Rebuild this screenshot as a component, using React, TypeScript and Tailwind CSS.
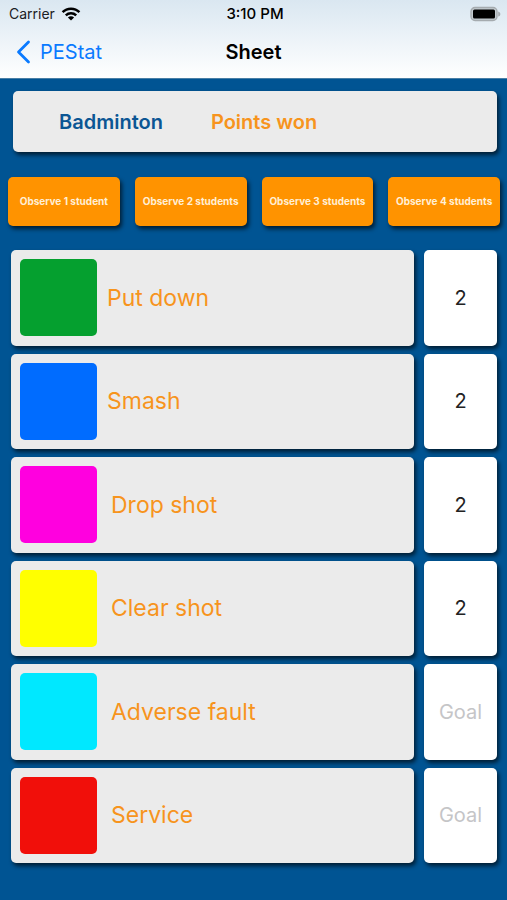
import { useState } from "react";

interface Action {
  id: string;
  label: string;
  swatch: string;
  // extra space between the swatch and the label
  inset: string;
  goal: string;
}

const initialActions: Action[] = [
  { id: "put-down", label: "Put down", swatch: "bg-[#05a02f]", inset: "pl-2.5", goal: "2" },
  { id: "smash", label: "Smash", swatch: "bg-[#006cff]", inset: "pl-2.5", goal: "2" },
  { id: "drop-shot", label: "Drop shot", swatch: "bg-[#ff00df]", inset: "pl-3.5", goal: "2" },
  { id: "clear-shot", label: "Clear shot", swatch: "bg-[#ffff00]", inset: "pl-3.5", goal: "2" },
  { id: "adverse-fault", label: "Adverse fault", swatch: "bg-[#00e8ff]", inset: "pl-3.5", goal: "" },
  { id: "service", label: "Service", swatch: "bg-[#f10f0a]", inset: "pl-3.5", goal: "" },
];

const observeModes = [
  "Observe 1 student",
  "Observe 2 students",
  "Observe 3 students",
  "Observe 4 students",
];

function WifiIcon() {
  return (
    <svg width="20" height="14" viewBox="0 0 20 14" fill="none" stroke="#000" strokeWidth="2.5" aria-hidden="true">
      <path d="M1.6 5.2C6.2 0.6 13.8 0.6 18.4 5.2" />
      <path d="M4.8 8.4C7.7 5.6 12.3 5.6 15.2 8.4" />
      <path d="M10 13.6L6.9 10.5C8.7 8.9 11.3 8.9 13.1 10.5Z" fill="#000" stroke="none" />
    </svg>
  );
}

function BatteryIcon() {
  return (
    <svg width="31" height="16" viewBox="0 0 31 16" aria-hidden="true">
      <rect x="1" y="1.5" width="26" height="13" rx="4" fill="#c3cbd0" stroke="#a5abaf" strokeWidth="1.4" />
      <rect x="3" y="3.5" width="22" height="9" rx="1.5" fill="#000" />
      <path d="M28.2 5.4C31 6.3 31 9.7 28.2 10.6Z" fill="#a5abaf" />
    </svg>
  );
}

function StatusBar() {
  return (
    <div className="grid h-7 grid-cols-3 items-center pl-[9px] pr-1.5 text-sm text-[#1b2024]">
      <div className="flex items-center gap-1.5">
        <span>Carrier</span>
        <WifiIcon />
      </div>
      <span className="text-center text-[15px] font-medium text-black">3:10 PM</span>
      <div className="flex justify-end">
        <BatteryIcon />
      </div>
    </div>
  );
}

function NavBar() {
  return (
    <nav className="grid h-12 grid-cols-3 items-center px-4">
      <a href="#pestat" className="flex items-center gap-2 text-xl text-[#0a7aff]">
        <svg width="16" height="24" viewBox="0 0 16 24" fill="none" stroke="currentColor" strokeWidth="2.8" strokeLinecap="round" strokeLinejoin="round" aria-hidden="true">
          <path d="M12.5 2L2.5 12L12.5 22" />
        </svg>
        PEStat
      </a>
      <h1 className="text-center text-xl font-semibold text-black">Sheet</h1>
    </nav>
  );
}

export default function App() {
  const [actions, setActions] = useState(initialActions);

  const setGoal = (id: string, goal: string) => {
    setActions(actions.map((a) => (a.id === id ? { ...a, goal } : a)));
  };

  return (
    <div className="flex min-h-screen flex-col bg-[#005493] font-['Inter','Liberation_Sans',sans-serif]">
      <header className="border-b border-[#4a7fa6] bg-linear-to-b from-[#dae7f1] to-white pb-0.5">
        <StatusBar />
        <NavBar />
      </header>

      <main className="flex flex-1 flex-col pb-[37px] pt-3">
        <section className="ml-[13px] mr-2.5 flex h-[61px] items-center gap-12 rounded-[5px] bg-[#ebebeb] pl-[46px] text-xl font-semibold shadow-[2px_3px_4px_rgba(0,0,0,0.65)]">
          <h2 className="text-[#0b5694]">Badminton</h2>
          <p className="text-[#f7941d]">Points won</p>
        </section>

        <div className="ml-2 mr-[7px] mt-[25px] grid grid-cols-4 gap-[15px]">
          {observeModes.map((mode) => (
            <button
              key={mode}
              type="button"
              className="h-[49px] cursor-pointer whitespace-nowrap rounded-[5px] bg-[#ff9300] text-[10px] font-bold text-[#ffefd6] shadow-[2px_3px_4px_rgba(0,0,0,0.65)]"
            >
              {mode}
            </button>
          ))}
        </div>

        <ul className="ml-[11px] mr-2.5 mt-6 flex flex-1 flex-col gap-2">
          {actions.map((action) => (
            <li key={action.id} className="flex min-h-22 flex-1 gap-2.5">
              <button
                type="button"
                className="flex flex-1 cursor-pointer items-center rounded-[5px] bg-[#ebebeb] pl-[9px] text-left shadow-[2px_3px_4px_rgba(0,0,0,0.65)]"
              >
                <span className={`h-[77px] w-[77px] rounded-[5px] ${action.swatch}`} />
                <span className={`text-[23px] text-[#f7941d] ${action.inset}`}>{action.label}</span>
              </button>
              <input
                type="text"
                inputMode="numeric"
                aria-label={`${action.label} goal`}
                placeholder="Goal"
                value={action.goal}
                onChange={(e) => setGoal(action.id, e.target.value)}
                className="w-[73px] rounded-[5px] bg-white text-center text-xl text-[#222] shadow-[2px_3px_4px_rgba(0,0,0,0.65)] outline-none placeholder:text-[#c5c5c7]"
              />
            </li>
          ))}
        </ul>
      </main>
    </div>
  );
}
